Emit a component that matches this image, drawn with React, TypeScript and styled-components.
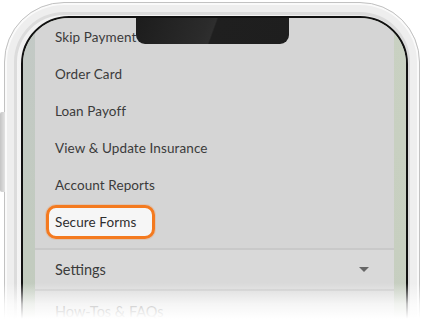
import React from "react";
import styled, { createGlobalStyle } from "styled-components";

const GlobalStyle = createGlobalStyle`
  html, body { margin: 0; padding: 0; background: #ffffff; }
  body { font-family: Lato, "Open Sans", Arial, sans-serif; overflow: hidden; }
  * { box-sizing: border-box; }
`;

const Stage = styled.div`
  position: relative;
  width: 425px;
  height: 325px;
  overflow: hidden;
  background: #ffffff;
`;

const SideButton = styled.div`
  position: absolute;
  left: 0;
  top: 112px;
  width: 5px;
  height: 80px;
  border-radius: 2px 0 0 2px;
  background: linear-gradient(90deg, #c4c4c4, #e2e2e2);
`;

const PhoneFrame = styled.div`
  margin: 2px 0 0 4px;
  width: 416px;
  height: 420px;
  border-radius: 60px;
  border: 1px solid #c2c2c2;
  padding: 13px 11px 0 16px;
  background: linear-gradient(90deg, #e6e6e6 0%, #f8f8f8 2%, #f1f1f1 4%, #f6f6f6 50%, #e8e8e8 96%, #d0d0d0 98%, #e2e2e2 100%);
  box-shadow: inset 0 0 0 2px #fafafa, inset 0 0 0 9px #eeeeee, inset 0 0 0 12px #dcdcdc;
`;

const Screen = styled.div`
  position: relative;
  height: 100%;
  border: 2px solid #111111;
  border-radius: 48px;
  overflow: hidden;
  display: flex;
  background: #c6ccc1;
`;

const Strip = styled.div<{ $w: number; $tone: string }>`
  width: ${(p) => p.$w}px;
  flex: none;
  background: ${(p) => p.$tone};
`;

const Panel = styled.nav`
  flex: 1;
  display: flex;
  flex-direction: column;
  background: #d5d5d5;
`;

const List = styled.div`
  display: flex;
  flex-direction: column;
  padding-bottom: 8px;
`;

const Item = styled.div`
  height: 37px;
  display: flex;
  align-items: center;
  padding-left: 20px;
  font-size: 13.5px;
  color: #3b3b3b;
  letter-spacing: 0.1px;
`;

const Highlight = styled.span`
  display: inline-flex;
  align-items: center;
  height: 34px;
  margin-left: -9px;
  padding: 0 16px 0 6px;
  border: 3px solid #f47a1f;
  border-radius: 10px;
  background: #f6f6f6;
  color: #2e2e2e;
  box-shadow: 0 0 0 1px rgba(244, 122, 31, 0.18);
`;

const Section = styled.div<{ $h: number }>`
  height: ${(p) => p.$h}px;
  flex: none;
  display: flex;
  align-items: center;
  justify-content: space-between;
  padding: 0 25px 0 20px;
  border-top: 2px solid #c9c9c9;
  background: #d9d9d9;
  font-size: 14.5px;
  color: #3b3b3b;
`;

const Caret = styled.span`
  width: 0;
  height: 0;
  border-left: 5px solid transparent;
  border-right: 5px solid transparent;
  border-top: 5px solid #666666;
`;

const Notch = styled.div`
  position: absolute;
  top: -2px;
  left: 113px;
  width: 153px;
  height: 28px;
  border-radius: 0 0 9px 9px;
  background: linear-gradient(110deg, #1c1c1c 0%, #2b2b2b 45%, #2e2e2e 50%, #1f1f1f 51%, #1e1e1e 100%);
`;

const Fade = styled.div`
  position: absolute;
  left: 0;
  right: 0;
  bottom: 0;
  height: 42px;
  background: linear-gradient(180deg, rgba(255,255,255,0) 0%, rgba(255,255,255,0.75) 50%, #ffffff 85%);
  pointer-events: none;
`;

const items = ["Skip Payment", "Order Card", "Loan Payoff", "View & Update Insurance", "Account Reports"];

export default function App() {
  return (
    <Stage>
      <GlobalStyle />
      <SideButton />
      <PhoneFrame>
        <Screen>
          <Strip $w={12} $tone="linear-gradient(180deg, #c3c9c6 0%, #c2cbbf 60%, #c4cdbd 100%)" />
          <Panel>
            <List>
              {items.map((t) => (
                <Item key={t}>{t}</Item>
              ))}
              <Item>
                <Highlight>Secure Forms</Highlight>
              </Item>
            </List>
            <Section $h={41}>
              <span>Settings</span>
              <Caret />
            </Section>
            <Section $h={42}>
              <span>How-Tos &amp; FAQs</span>
            </Section>
          </Panel>
          <Strip $w={12} $tone="linear-gradient(180deg, #c9d1c2 0%, #c7cfc0 60%, #c4cbc6 100%)" />
          <Notch />
        </Screen>
      </PhoneFrame>
      <Fade />
    </Stage>
  );
}
